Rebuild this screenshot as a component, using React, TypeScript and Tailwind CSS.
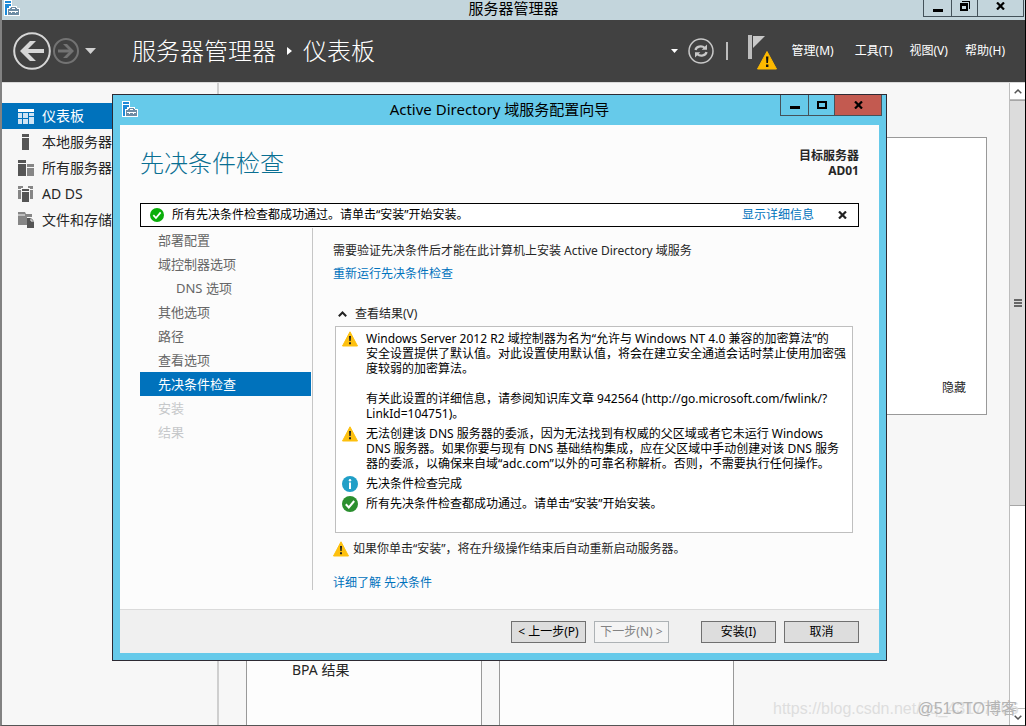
import { clsx } from "clsx"
import type { ReactNode } from "react"

const sidebarItems = [
    { label: "仪表板", icon: <DashboardIcon />, active: true },
    { label: "本地服务器", icon: <LocalServerIcon /> },
    { label: "所有服务器", icon: <AllServersIcon /> },
    { label: "AD DS", icon: <DomainIcon /> },
    { label: "文件和存储服务", icon: <StorageIcon /> },
]

const menus = ["管理(M)", "工具(T)", "视图(V)", "帮助(H)"]

const steps = [
    { label: "部署配置" },
    { label: "域控制器选项" },
    { label: "DNS 选项", nested: true },
    { label: "其他选项" },
    { label: "路径" },
    { label: "查看选项" },
    { label: "先决条件检查", active: true },
    { label: "安装", disabled: true },
    { label: "结果", disabled: true },
]

const results = [
    {
        icon: <WarningIcon className="h-4 w-4" />,
        text: "Windows Server 2012 R2 域控制器为名为“允许与 Windows NT 4.0 兼容的加密算法”的\n安全设置提供了默认值。对此设置使用默认值，将会在建立安全通道会话时禁止使用加密强\n度较弱的加密算法。\n\n有关此设置的详细信息，请参阅知识库文章 942564 (http://go.microsoft.com/fwlink/?\nLinkId=104751)。",
    },
    {
        icon: <WarningIcon className="h-4 w-4" />,
        text: "无法创建该 DNS 服务器的委派，因为无法找到有权威的父区域或者它未运行 Windows\nDNS 服务器。如果你要与现有 DNS 基础结构集成，应在父区域中手动创建对该 DNS 服务\n器的委派，以确保来自域“adc.com”以外的可靠名称解析。否则，不需要执行任何操作。",
    },
    { icon: <InfoIcon />, text: "先决条件检查完成" },
    { icon: <CheckIcon color="#2b8f2f" className="h-4 w-4" />, text: "所有先决条件检查都成功通过。请单击“安装”开始安装。" },
]

function ServerManagerIcon() {
    return (
        <svg width="16" height="16" viewBox="0 0 16 16" shapeRendering="crispEdges">
            <path d="M0 0h8v6h5v2h3v8H0z" fill="#fff" />
            <path d="M1 1h6v2H1zM1 4h6v2H5v2H3v7H1z" fill="#1d8ad8" />
            <path d="M4 9h11v6H4z" fill="#6d8ba3" />
            <path d="M7 8V7h5v1h1v1H6V8z" fill="#6d8ba3" />
            <path d="M8 8h3v1H8zM5 11h9v1h-2v1h-1v-1H8v1H7v-1H5z" fill="#fff" />
        </svg>
    )
}

function WarningIcon({ className }: { className?: string }) {
    return (
        <svg className={className} viewBox="0 0 16 16">
            <path d="M8 .8 15.500 15H.5z" fill="#fdc00f" stroke="#fdc00f" strokeLinejoin="round" />
            <path d="M7 5h2l-.3 5H7.300z" fill="#222" />
            <path d="M7 11.200h2v2H7z" fill="#222" />
        </svg>
    )
}

function InfoIcon() {
    return (
        <svg className="h-4 w-4" viewBox="0 0 16 16">
            <circle cx="8" cy="8" r="8" fill="#219fc7" />
            <circle cx="8" cy="4.300" r="1.200" fill="#fff" />
            <path d="M7 6.500h2V13H7z" fill="#fff" />
        </svg>
    )
}

function CheckIcon({ color, className }: { color: string; className?: string }) {
    return (
        <svg className={className} viewBox="0 0 16 16">
            <circle cx="8" cy="8" r="8" fill={color} />
            <path d="m3.800 8.200 3 3.200 5.400-6.400" fill="none" stroke="#fff" strokeWidth="2" />
        </svg>
    )
}

function DashboardIcon() {
    return (
        <svg width="16" height="15" viewBox="0 0 16 15" shapeRendering="crispEdges">
            <path d="M0 0h16v3H0z" fill="#fff" />
            <path d="M0 4h4v5H0zM5 4h5v5H5zM11 4h5v3h-5zM0 10h4v5H0zM5 10h5v5H5zM11 8h5v7h-5z" fill="#cfe4f4" />
        </svg>
    )
}

function LocalServerIcon() {
    return (
        <svg width="16" height="16" viewBox="0 0 16 16" shapeRendering="crispEdges">
            <path d="M4 0h7v3H4zM4 4h7v12H4z" fill="#555" />
        </svg>
    )
}

function AllServersIcon() {
    return (
        <svg width="16" height="16" viewBox="0 0 16 16" shapeRendering="crispEdges">
            <path d="M0 0h8v3H0zM0 4h8v12H0z" fill="#555" />
            <path d="M9 4h7v3H9zM9 8h7v8H9z" fill="#868686" />
        </svg>
    )
}

function DomainIcon() {
    return (
        <svg width="16" height="16" viewBox="0 0 16 16" shapeRendering="crispEdges">
            <path d="M0 0h5v2H3v1H0zM10 0h5v3h-3V2h-2zM0 4h3v9H0zM12 4h3v9h-3z" fill="#868686" />
            <path d="M4 3h7v2H4zM4 6h7v10H4z" fill="#555" />
        </svg>
    )
}

function StorageIcon() {
    return (
        <svg width="16" height="16" viewBox="0 0 16 16">
            <path d="M0 0h7l1 2h6v3H9v8H0z" fill="#868686" />
            <path d="M0 3h7" stroke="#f7f7f7" />
            <path d="M9 6h4l3 3v7H9z" fill="#555" />
            <path d="M13 6.500V9h3" fill="none" stroke="#f7f7f7" />
        </svg>
    )
}

function CaptionButton({ label, className, children }: { label: string; className?: string; children: ReactNode }) {
    return (
        <button type="button" aria-label={label} className={clsx("flex items-center justify-center border-[#44525a]", className)}>
            {children}
        </button>
    )
}

function MinimizeGlyph() {
    return (
        <svg width="10" height="9" viewBox="0 0 10 9" shapeRendering="crispEdges">
            <path d="M0 5h10v3H0z" />
        </svg>
    )
}

function RestoreGlyph() {
    return (
        <svg width="10" height="10" viewBox="0 0 10 10" shapeRendering="crispEdges">
            <path d="M2 0h8v8H9V1H2zM0 2h8v8H0zM2 5v3h4V5z" fillRule="evenodd" />
        </svg>
    )
}

function MaximizeGlyph() {
    return (
        <svg width="10" height="8" viewBox="0 0 10 8" shapeRendering="crispEdges">
            <path d="M0 0h10v8H0zM2 2v4h6V2z" fillRule="evenodd" />
        </svg>
    )
}

function CloseGlyph() {
    return (
        <svg width="9" height="8" viewBox="0 0 9 8">
            <path d="m1 .5 7 7M8 .5l-7 7" stroke="currentColor" strokeWidth="2.200" />
        </svg>
    )
}

function TitleBar() {
    return (
        <div className="grid h-5 grid-cols-[1fr_auto_1fr] items-start bg-[#c3d5dc]">
            <div className="pl-0.5">
                <ServerManagerIcon />
            </div>
            <h1 className="text-[15px] leading-4 text-black">服务器管理器</h1>
            <div className="flex h-[17px] justify-end">
                <CaptionButton label="最小化" className="w-7 border-b border-l">
                    <MinimizeGlyph />
                </CaptionButton>
                <CaptionButton label="还原" className="w-[26px] border-b border-l pb-1">
                    <RestoreGlyph />
                </CaptionButton>
                <CaptionButton label="关闭" className="mr-px w-[47px] border-x border-b pb-1">
                    <CloseGlyph />
                </CaptionButton>
            </div>
        </div>
    )
}

function Header() {
    return (
        <header className="flex h-[62px] items-center bg-[#414141] pr-5 pl-[11px] text-white">
            <button type="button" aria-label="后退">
                <svg width="38" height="38" viewBox="0 0 38 38" fill="none">
                    <circle cx="19" cy="19" r="17.800" stroke="#d6d6d6" strokeWidth="2" />
                    <path d="M9 19h22" stroke="#d6d6d6" strokeWidth="4" />
                    <path d="M7 19 17 9h6L13 19l10 10h-6z" fill="#d6d6d6" />
                </svg>
            </button>
            <button type="button" aria-label="前进" className="ml-0.5">
                <svg width="26" height="26" viewBox="0 0 26 26" fill="none">
                    <circle cx="13" cy="13" r="12" stroke="#737373" strokeWidth="2" />
                    <path d="M5 13h14" stroke="#737373" strokeWidth="3" />
                    <path d="M21 13 14 6h-4l7 7-7 7h4z" fill="#737373" />
                </svg>
            </button>
            <button type="button" aria-label="历史记录" className="ml-1.5">
                <svg width="11" height="6" viewBox="0 0 11 6"><path d="M0 0h11L5.500 6z" fill="#d0d0d0" /></svg>
            </button>
            <div className="ml-9 flex items-center text-2xl font-light">
                <span>服务器管理器</span>
                <svg className="mx-[11px]" width="5" height="8" viewBox="0 0 5 8"><path d="M0 0l5 4-5 4z" fill="#fff" /></svg>
                <span>仪表板</span>
            </div>
            <div className="ml-auto flex items-center text-xs">
                <button type="button" aria-label="刷新选项">
                    <svg width="7" height="4" viewBox="0 0 7 4"><path d="M0 0h7L3.500 4z" fill="#fff" /></svg>
                </button>
                <button type="button" aria-label="刷新" className="ml-2.5">
                    <svg width="26" height="26" viewBox="0 0 26 26" fill="none" stroke="#c8c8c8">
                        <circle cx="13" cy="13" r="12" strokeWidth="1.500" />
                        <path d="M7.500 12c.5-3.500 6-5 9.500-2M18.500 14c-.5 3.500-6 5-9.500 2" strokeWidth="2.200" />
                        <path d="M19 6.500v5.300h-5.300zM7 19.500v-5.300h5.300z" fill="#c8c8c8" stroke="none" />
                    </svg>
                </button>
                <span className="ml-3 h-[18px] w-0.5 bg-[#bdbdbd]" />
                <button type="button" aria-label="通知" className="ml-5 pt-1">
                    <svg width="30" height="36" viewBox="0 0 30 36">
                        <path d="M0 0h4v24H0z" fill="#bdbdbd" />
                        <path d="M5 1h12L5 13z" fill="#c8c8c8" />
                        <path d="M19 16.500 28.500 34H9.500z" fill="#fdb900" stroke="#fdb900" strokeLinejoin="round" />
                        <path d="M18 21.500h2.400l-.4 6.500h-1.600zM18 29.500h2.400V32H18z" fill="#111" />
                    </svg>
                </button>
                <div className="ml-3.5 flex gap-[17px]">
                    {menus.map((menu) => (
                        <button type="button" key={menu} className="first:mr-1">{menu}</button>
                    ))}
                </div>
            </div>
        </header>
    )
}

function Sidebar() {
    return (
        <nav className="w-[217px] shrink-0 border-r-2 border-[#cfcfcf] pt-5">
            {sidebarItems.map((item) => (
                <a
                    key={item.label}
                    href="#"
                    className={clsx("flex h-[26px] items-center gap-2 pl-4 text-sm",
                        item.active ? "bg-[#0072bc] text-white" : "text-[#262626]"
                    )}
                >
                    {item.icon}
                    {item.label}
                </a>
            ))}
        </nav>
    )
}

function Dashboard() {
    return (
        <main className="flex flex-1 flex-col pt-[54px] pr-[22px] pl-[27px]">
            <section className="flex min-h-[278px] items-end justify-end border border-[#999] bg-white px-5 py-[18px]">
                <button type="button" className="text-xs text-[#262626]">隐藏</button>
            </section>
            <div className="mt-4 grid flex-1 grid-cols-3 gap-[17px]">
                <section className="flex flex-col justify-end border border-b-0 border-[#999] bg-[#fdfdfd] pb-[45px] pl-[45px] text-sm text-[#262626]">
                    BPA 结果
                </section>
                <section className="border border-b-0 border-[#999] bg-[#fdfdfd]" />
            </div>
        </main>
    )
}

function ScrollBar() {
    return (
        <div className="flex w-4 shrink-0 flex-col border-l border-[#bdbdbd] bg-white">
            <button type="button" aria-label="向上滚动" className="flex h-[17px] items-center justify-center border-b border-[#bdbdbd]">
                <svg width="8" height="5" viewBox="0 0 8 5"><path d="M.7 4.300 4 1l3.300 3.300" fill="none" stroke="#555" strokeWidth="1.500" /></svg>
            </button>
            <div className="flex h-[406px] flex-col items-center justify-center gap-px border-y border-[#a6a6a6] bg-[#dcdcdc]">
                <span className="h-0.5 w-2 bg-[#666]" />
                <span className="h-0.5 w-2 bg-[#666]" />
                <span className="h-0.5 w-2 bg-[#666]" />
            </div>
            <button type="button" aria-label="向下滚动" className="mt-auto flex h-[17px] items-center justify-center border-t border-[#bdbdbd]">
                <svg width="8" height="5" viewBox="0 0 8 5"><path d="M.7.7 4 4 7.300.7" fill="none" stroke="#555" strokeWidth="1.500" /></svg>
            </button>
        </div>
    )
}

function WizardButton({ disabled, children }: { disabled?: boolean; children: ReactNode }) {
    return (
        <button
            type="button"
            disabled={disabled}
            className={clsx("h-[22px] w-[75px] border text-xs whitespace-nowrap",
                disabled ? "border-[#adb2b5] bg-[#f4f4f4] text-[#838383]" : "border-[#707070] bg-[#dddddd] text-black"
            )}
        >
            {children}
        </button>
    )
}

function Wizard() {
    return (
        <div role="dialog" aria-labelledby="wizard-title" className="absolute top-[94px] right-[138px] left-[110px] border border-[#2d2a33] bg-[#66caea] px-[7px] pb-[7px]">
            <div className="grid h-[30px] grid-cols-[1fr_auto_1fr] items-start">
                <div className="pt-1.5 pl-0.5">
                    <ServerManagerIcon />
                </div>
                <h2 id="wizard-title" className="text-[15px] leading-7 text-black">Active Directory 域服务配置向导</h2>
                <div className="-mr-[3px] flex h-[21px] justify-end">
                    <CaptionButton label="最小化" className="w-7 border-b border-l">
                        <MinimizeGlyph />
                    </CaptionButton>
                    <CaptionButton label="最大化" className="w-[26px] border-b border-l">
                        <MaximizeGlyph />
                    </CaptionButton>
                    <CaptionButton label="关闭" className="w-12 border-x border-b bg-[#c35a50]">
                        <CloseGlyph />
                    </CaptionButton>
                </div>
            </div>

            <div className="bg-[#fcfcfc] text-xs text-[#262626]">
                <div className="px-5 pb-[18px]">
                    <div className="flex items-start justify-between">
                        <h3 className="pt-5 text-2xl leading-9 font-light text-[#0a6f92]">先决条件检查</h3>
                        <div className="pt-[23px] text-right leading-[15px] font-bold">
                            <p>目标服务器</p>
                            <p>AD01</p>
                        </div>
                    </div>

                    <div className="mt-[22px] flex h-6 items-center border border-black bg-white pr-[11px] pl-[9px] text-black">
                        <CheckIcon color="#0aae0a" className="h-3.5 w-3.5" />
                        <span className="ml-2">所有先决条件检查都成功通过。请单击“安装”开始安装。</span>
                        <a href="#" className="ml-auto text-[#0072bc]">显示详细信息</a>
                        <button type="button" aria-label="关闭通知" className="ml-6 text-[#222]">
                            <CloseGlyph />
                        </button>
                    </div>

                    <div className="flex">
                        <ol className="my-px w-[173px] shrink-0 border-r border-[#c6c6c6] pr-px text-[13px] leading-6">
                            {steps.map((step) => (
                                <li
                                    key={step.label}
                                    className={clsx(step.nested ? "pl-9" : "pl-[18px]",
                                        step.active && "bg-[#0072bc] text-white",
                                        step.disabled && "text-[#c6c8ca]",
                                        !step.active && !step.disabled && "text-[#666]"
                                    )}
                                >
                                    {step.label}
                                </li>
                            ))}
                        </ol>

                        <div className="flex-1 pt-3.5 pr-1.5 pl-5">
                            <p className="leading-5">需要验证先决条件后才能在此计算机上安装 Active Directory 域服务</p>
                            <a href="#" className="mt-[3px] block leading-5 text-[#0072bc]">重新运行先决条件检查</a>
                            <button type="button" className="mt-5 flex items-center gap-2 pl-[5px] leading-5">
                                <svg width="9" height="6" viewBox="0 0 9 6"><path d="M.8 5.200 4.500 1.500l3.700 3.700" fill="none" stroke="#222" strokeWidth="2" /></svg>
                                查看结果(V)
                            </button>
                            <ul className="mt-0.5 ml-0.5 flex min-h-[207px] flex-col gap-[5px] border border-[#bfbfbf] bg-white pt-1 pl-1.5 text-black">
                                {results.map((result) => (
                                    <li key={result.text} className="flex gap-2">
                                        <span className="h-[15px] shrink-0">{result.icon}</span>
                                        <p className="leading-[15px] whitespace-pre">{result.text}</p>
                                    </li>
                                ))}
                            </ul>
                            <p className="mt-1.5 flex items-center gap-1 leading-5">
                                <WarningIcon className="h-4 w-4" />
                                如果你单击“安装”，将在升级操作结束后自动重新启动服务器。
                            </p>
                            <a href="#" className="mt-4 block leading-4 text-[#0072bc]">详细了解 先决条件</a>
                        </div>
                    </div>
                </div>

                <div className="flex h-11 items-center justify-end border-t border-[#dadada] bg-[#f0f0f0] pr-5">
                    <WizardButton>&lt; 上一步(P)</WizardButton>
                    <span className="w-2" />
                    <WizardButton disabled>下一步(N) &gt;</WizardButton>
                    <span className="w-8" />
                    <WizardButton>安装(I)</WizardButton>
                    <span className="w-2" />
                    <WizardButton>取消</WizardButton>
                </div>
            </div>
        </div>
    )
}

export default function App() {
    return (
        <div className="relative flex min-h-screen flex-col border-r border-b border-l-2 border-r-black border-b-[#555] border-l-[#828282] bg-[#f7f7f7] font-['Noto_Sans','Noto_Sans_CJK_SC',sans-serif]">
            <TitleBar />
            <Header />
            <div className="flex flex-1 border-t border-[#d9d9d9]">
                <Sidebar />
                <Dashboard />
                <ScrollBar />
            </div>
            <Wizard />
            <p className="absolute bottom-1 left-[771px] font-['Liberation_Sans',sans-serif] text-base whitespace-nowrap text-[#dedede]">
                https://blog.csdn.net/qq_43177606
            </p>
            <p className="absolute right-2 bottom-1 font-['Liberation_Sans','Noto_Sans_CJK_SC',sans-serif] text-base whitespace-nowrap text-[#b4b4b4]">
                @51CTO博客
            </p>
        </div>
    )
}
